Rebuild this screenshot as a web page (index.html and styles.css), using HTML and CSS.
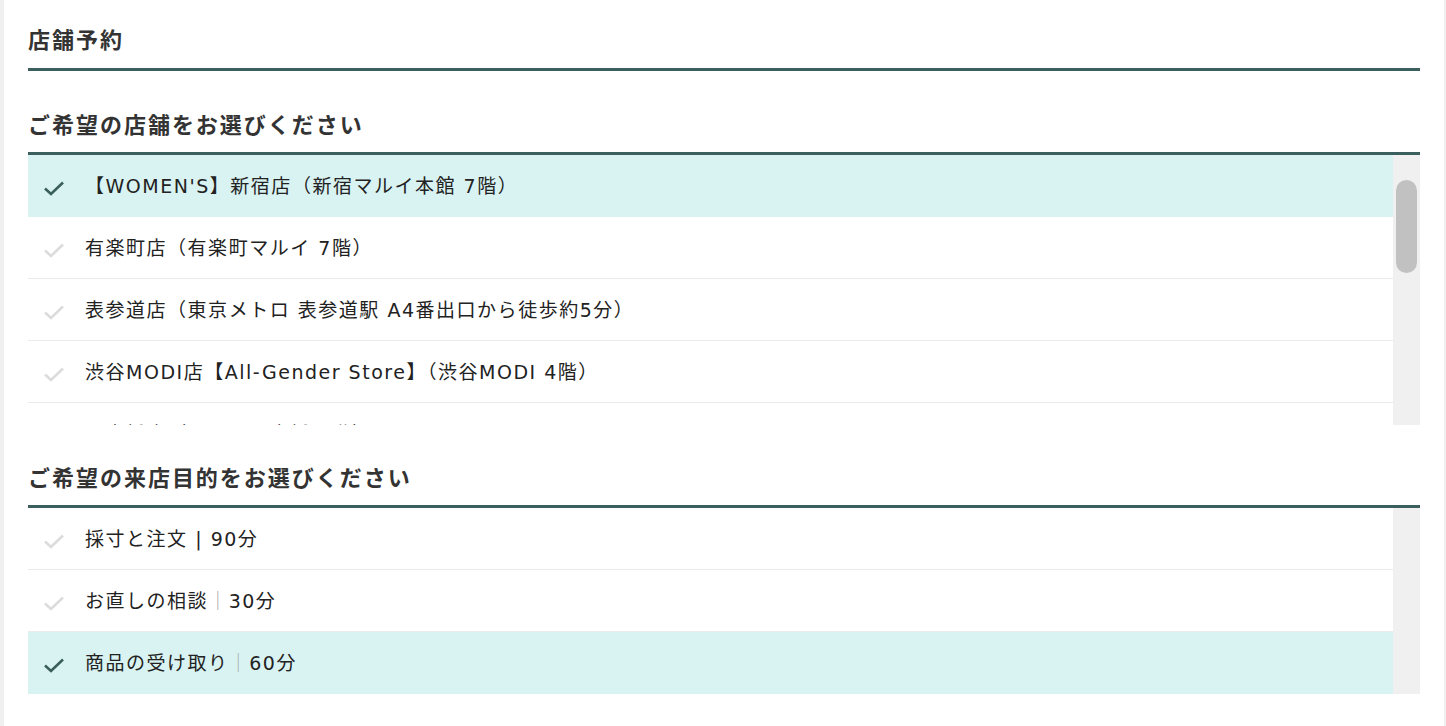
FILE: index.html
```html
<!DOCTYPE html>
<html lang="ja">
<head>
	<meta charset="utf-8">
	<title>店舗予約</title>
	<link rel="stylesheet" href="styles.css">
</head>
<body>
	<div class="page">
		<h1 class="page-title">店舗予約</h1>

		<h2 class="section-title">ご希望の店舗をお選びください</h2>
		<div class="choice-box store-box">
			<ul class="choice-list">
				<li class="choice selected"><span class="check"><svg viewBox="0 0 22 16" width="22" height="16"><path d="M2 8.5 L8 14 L20 2.5"/></svg></span><span class="label">【WOMEN'S】新宿店（新宿マルイ本館 7階）</span></li>
				<li class="choice"><span class="check"><svg viewBox="0 0 22 16" width="22" height="16"><path d="M2 8.5 L8 14 L20 2.5"/></svg></span><span class="label">有楽町店（有楽町マルイ 7階）</span></li>
				<li class="choice"><span class="check"><svg viewBox="0 0 22 16" width="22" height="16"><path d="M2 8.5 L8 14 L20 2.5"/></svg></span><span class="label">表参道店（東京メトロ 表参道駅 A4番出口から徒歩約5分）</span></li>
				<li class="choice"><span class="check"><svg viewBox="0 0 22 16" width="22" height="16"><path d="M2 8.5 L8 14 L20 2.5"/></svg></span><span class="label">渋谷MODI店【All-Gender Store】（渋谷MODI 4階）</span></li>
				<li class="choice"><span class="check"><svg viewBox="0 0 22 16" width="22" height="16"><path d="M2 8.5 L8 14 L20 2.5"/></svg></span><span class="label">日本橋店（コレド日本橋 3階）</span></li>
				<li class="choice"><span class="check"><svg viewBox="0 0 22 16" width="22" height="16"><path d="M2 8.5 L8 14 L20 2.5"/></svg></span><span class="label">池袋店（池袋マルイ 3階）</span></li>
				<li class="choice"><span class="check"><svg viewBox="0 0 22 16" width="22" height="16"><path d="M2 8.5 L8 14 L20 2.5"/></svg></span><span class="label">上野店（上野マルイ 5階）</span></li>
				<li class="choice"><span class="check"><svg viewBox="0 0 22 16" width="22" height="16"><path d="M2 8.5 L8 14 L20 2.5"/></svg></span><span class="label">横浜店（横浜ジョイナス 2階）</span></li>
				<li class="choice"><span class="check"><svg viewBox="0 0 22 16" width="22" height="16"><path d="M2 8.5 L8 14 L20 2.5"/></svg></span><span class="label">名古屋店（名古屋栄 2階）</span></li>
				<li class="choice"><span class="check"><svg viewBox="0 0 22 16" width="22" height="16"><path d="M2 8.5 L8 14 L20 2.5"/></svg></span><span class="label">大阪梅田店（梅田 4階）</span></li>
				<li class="choice"><span class="check"><svg viewBox="0 0 22 16" width="22" height="16"><path d="M2 8.5 L8 14 L20 2.5"/></svg></span><span class="label">神戸店（神戸マルイ 4階）</span></li>
			</ul>
			<div class="scroll-track"><div class="scroll-thumb"></div></div>
		</div>

		<h2 class="section-title">ご希望の来店目的をお選びください</h2>
		<div class="choice-box purpose-box">
			<ul class="choice-list">
				<li class="choice"><span class="check"><svg viewBox="0 0 22 16" width="22" height="16"><path d="M2 8.5 L8 14 L20 2.5"/></svg></span><span class="label">採寸と注文 <span class="bar dark">|</span> 90分</span></li>
				<li class="choice"><span class="check"><svg viewBox="0 0 22 16" width="22" height="16"><path d="M2 8.5 L8 14 L20 2.5"/></svg></span><span class="label">お直しの相談<span class="bar">｜</span>30分</span></li>
				<li class="choice selected"><span class="check"><svg viewBox="0 0 22 16" width="22" height="16"><path d="M2 8.5 L8 14 L20 2.5"/></svg></span><span class="label">商品の受け取り<span class="bar">｜</span>60分</span></li>
			</ul>
			<div class="scroll-track"></div>
		</div>
	</div>
</body>
</html>
```

FILE: styles.css
```css
html, body {
	margin: 0;
	padding: 0;
}
body {
	background-color: #f0f0f0;
	font-family: "DejaVu Sans", "Noto Sans CJK JP", sans-serif;
	color: #333;
}
.page {
	margin: 0 2px 0 4px;
	min-height: 726px;
	padding: 22px 24px 0 24px;
	background-color: #fff;
	box-sizing: border-box;
}
.page-title, .section-title {
	margin: 0;
	font-family: "Noto Sans CJK JP", sans-serif;
	font-size: 22px;
	line-height: 32px;
	font-weight: bold;
	letter-spacing: 0.09em;
	color: #333;
	border-bottom: 3px solid #3a5f5c;
}
.page-title {
	padding-bottom: 14px;
	margin-bottom: 36px;
}
.section-title {
	padding-bottom: 13px;
}

/* listas de opciones */
.choice-box {
	display: flex;
}
.store-box {
	height: 270px;
	margin-bottom: 35px;
}
.choice-list {
	flex: 1;
	list-style: none;
	margin: 0;
	padding: 0;
	overflow: hidden;
}
.choice {
	display: flex;
	align-items: center;
	gap: 20px;
	height: 61px;
	box-sizing: content-box;
	padding-left: 15px;
	border-bottom: 1px solid #ebebeb;
	font-size: 19px;
	letter-spacing: 0.08em;
	color: #222;
}
.choice.selected {
	background-color: #d9f3f2;
	border-bottom-color: #d9f3f2;
}
.label {
	margin-top: -3px;
}
.check {
	display: flex;
	width: 22px;
	height: 16px;
	margin-top: 4px;
}
.check path {
	fill: none;
	stroke: #dcdcdc;
	stroke-width: 2.6;
}
.selected .check path {
	stroke: #3a5f5c;
}
.bar {
	color: #aaa;
}
.bar.dark {
	color: #222;
}

/* barra de scroll */
.scroll-track {
	width: 27px;
	padding-top: 25px;
	box-sizing: border-box;
	background-color: #f0f0f0;
}
.scroll-thumb {
	height: 93px;
	margin: 0 3px;
	border-radius: 11px;
	background-color: #c1c1c1;
}
```
